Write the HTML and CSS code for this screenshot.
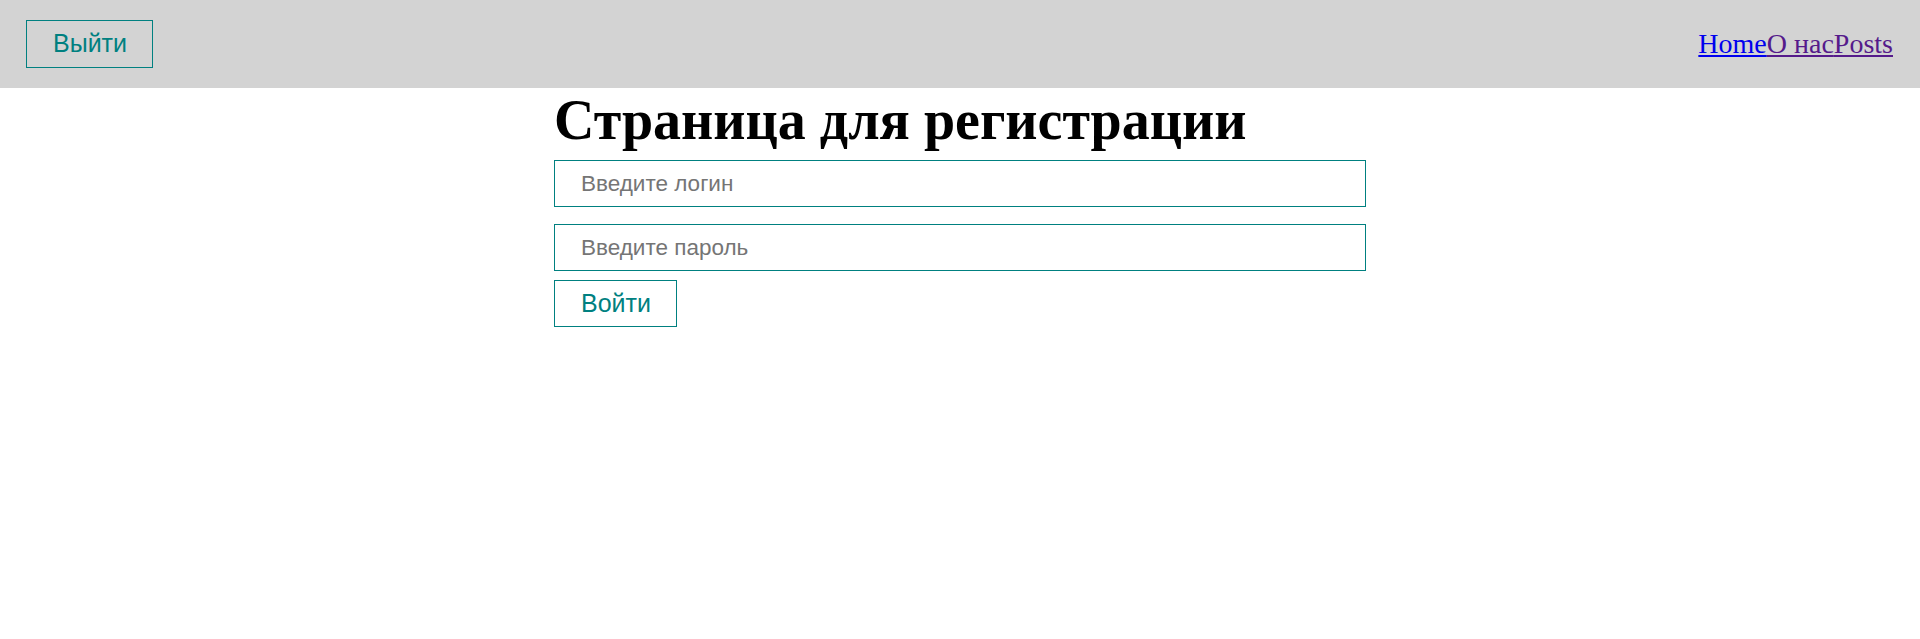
FILE: index.html
```html
<!DOCTYPE html>
<html lang="ru">
<head>
<meta charset="utf-8">
<title>Регистрация</title>
<link rel="stylesheet" href="styles.css">
</head>
<body>
<nav class="navbar">
  <button class="btn btn-nav">Выйти</button>
  <div class="nav-links">
    <a href="#home" class="link link-new">Home</a><a href="#about" class="link link-visited">О нас</a><a href="#posts" class="link link-visited">Posts</a>
  </div>
</nav>
<main class="page">
  <h1 class="title">Страница для регистрации</h1>
  <form class="form">
    <input class="field field-first" type="text" placeholder="Введите логин">
    <input class="field field-second" type="password" placeholder="Введите пароль">
    <button type="button" class="btn btn-submit">Войти</button>
  </form>
</main>
</body>
</html>
```
FILE: styles.css
```css
html, body {
  margin: 0;
  padding: 0;
  background: #ffffff;
}

body {
  font-family: "Liberation Serif", "Times New Roman", serif;
}

.navbar {
  height: 88px;
  box-sizing: border-box;
  background: #d3d3d3;
  display: flex;
  align-items: center;
  justify-content: space-between;
  padding: 0 27px 0 26px;
}

.btn {
  font-family: "Liberation Sans", Arial, sans-serif;
  font-size: 25px;
  line-height: 29px;
  color: #008080;
  background: transparent;
  border: 1px solid #008080;
  cursor: pointer;
  margin: 0;
}

.btn-nav {
  padding: 8px 25px 9px 26px;
}

.nav-links {
  font-size: 28px;
  display: flex;
}

.link {
  text-decoration: underline;
}

.link-new {
  color: #0000ee;
}

.link-visited {
  color: #551a8b;
}

.page {
  width: 812px;
  margin: 0 auto;
}

.title {
  font-size: 56px;
  font-weight: bold;
  line-height: 60px;
  margin: 2px 0 0 0;
  color: #000;
}

.form {
  display: flex;
  flex-direction: column;
  align-items: flex-start;
  margin-top: 10px;
}

.field {
  box-sizing: border-box;
  width: 100%;
  height: 47px;
  border: 1px solid #008080;
  padding: 0 26px;
  font-family: "Liberation Sans", Arial, sans-serif;
  font-size: 22.5px;
  color: #333;
  outline: none;
  margin: 0;
}

.field::placeholder {
  color: #757575;
}

.field-first {
  margin-bottom: 17px;
}

.field-second {
  margin-bottom: 9px;
}

.btn-submit {
  padding: 8px 25px 8px 26px;
}
```
